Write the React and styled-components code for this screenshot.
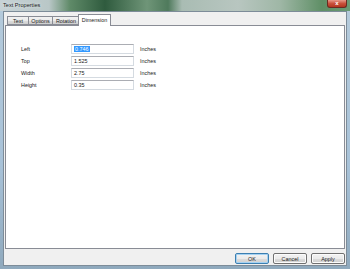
import React from 'react';
import styled, {createGlobalStyle} from 'styled-components';

const Global = createGlobalStyle`
  html, body {
    margin: 0;
    padding: 0;
    overflow: hidden;
    background: #9fb8c8;
  }
  body {
    font-family: "Liberation Sans", Arial, sans-serif;
  }
`;

const Window = styled.div`
  width: 350px;
  height: 269px;
  box-sizing: border-box;
  display: flex;
  flex-direction: column;
  padding: 0 3px 3px 3px;
  background: linear-gradient(90deg, #c7d2d6 0%, #b9c7c7 14%, #5f8a68 20%, #2f5b3e 30%, #6f9578 42%, #4f7a5c 48%, #a9bcb3 52%, #b8c6c0 68%, #9fb7a6 80%, #5f8f66 92%, #6a9a74 100%);
  position: relative;
`;

const Frame = styled.div`
  position: absolute;
  left: 0;
  right: 0;
  top: 11px;
  bottom: 0;
  background: linear-gradient(180deg, #b4cadb 0%, #a8c2d8 60%, #8fa9bd 100%);
  z-index: 0;
`;

const TitleBar = styled.div`
  height: 11px;
  display: flex;
  justify-content: space-between;
  align-items: flex-start;
  position: relative;
  z-index: 1;
`;

const Title = styled.div`
  font-size: 5.6px;
  color: #1a1a1a;
  line-height: 11px;
  padding-left: 0;
  text-shadow: 0 0 3px rgba(255, 255, 255, 0.9);
`;

const CloseBtn = styled.div`
  width: 20px;
  height: 8px;
  background: linear-gradient(180deg, #e89a8a 0%, #c9503b 50%, #b3361f 100%);
  border: 1px solid #6b2a22;
  border-top: none;
  border-radius: 0 0 3px 3px;
  color: #fff;
  font-size: 6px;
  font-weight: bold;
  line-height: 7px;
  text-align: center;
  box-sizing: border-box;
`;

const Client = styled.div`
  flex: 1;
  display: flex;
  flex-direction: column;
  background: #f0f0f0;
  border: 1px solid #7d8c99;
  padding-top: 2px;
  position: relative;
  z-index: 1;
`;

const Tabs = styled.div`
  height: 11px;
  display: flex;
  align-items: flex-end;
  padding-left: 3px;
  position: relative;
  z-index: 2;
`;

const Tab = styled.div`
  box-sizing: border-box;
  width: ${p => p.w}px;
  height: ${p => (p.active ? 12 : 9)}px;
  margin: ${p => (p.active ? '0 -1px -1px -1px' : '0 -1px 0 0')};
  border: 1px solid #898c95;
  border-bottom: ${p => (p.active ? 'none' : '1px solid #898c95')};
  background: ${p => (p.active ? '#ffffff' : 'linear-gradient(180deg, #f2f2f2 0%, #ebebeb 50%, #dddddd 51%, #cfcfcf 100%)')};
  font-size: 5.4px;
  color: #1a1a1a;
  display: flex;
  align-items: center;
  justify-content: center;
  padding-bottom: ${p => (p.active ? 2 : 0)}px;
  position: relative;
  z-index: ${p => (p.active ? 2 : 1)};
`;

const Panel = styled.div`
  flex: 1;
  margin: 0 1px 0 1px;
  background: #ffffff;
  border: 1px solid #898c95;
  padding: 18px 0 0 15px;
`;

const Form = styled.div`
  display: grid;
  grid-template-columns: 50px 63px auto;
  grid-auto-rows: 10px;
  row-gap: 2px;
  align-items: center;
`;

const Label = styled.div`
  font-size: 5.4px;
  color: #1a1a1a;
`;

const Field = styled.div`
  box-sizing: border-box;
  height: 10px;
  border: 1px solid #d5dbe1;
  border-top-color: #abadb3;
  background: #fff;
  font-size: 5.4px;
  color: #1a1a1a;
  line-height: 8px;
  padding-left: 2px;
`;

const Selected = styled.span`
  background: #3399ff;
  color: #fff;
  padding: 0 1px;
`;

const Unit = styled.div`
  font-size: 5.4px;
  color: #1a1a1a;
  padding-left: 6px;
`;

const Footer = styled.div`
  height: 16px;
  display: flex;
  justify-content: flex-end;
  align-items: flex-start;
  gap: 4px;
  padding: 4px 1px 0 0;
  box-sizing: border-box;
`;

const Button = styled.div`
  box-sizing: border-box;
  width: 34px;
  height: 11px;
  border: 1px solid ${p => (p.primary ? '#3c7fb1' : '#707070')};
  border-radius: 2px;
  background: linear-gradient(180deg, #f2f2f2 0%, #ebebeb 50%, #dddddd 51%, #cfcfcf 100%);
  box-shadow: ${p => (p.primary ? 'inset 0 0 0 1px #a6d2f2' : 'inset 0 0 0 1px #fbfbfb')};
  font-size: 5.4px;
  color: #1a1a1a;
  display: flex;
  align-items: center;
  justify-content: center;
`;

const tabs = [
  {name: 'Text', w: 22},
  {name: 'Options', w: 25},
  {name: 'Rotation', w: 28},
  {name: 'Dimension', w: 33, active: true},
];

const rows = [
  {label: 'Left', value: '0.746', selected: true},
  {label: 'Top', value: '1.525'},
  {label: 'Width', value: '2.75'},
  {label: 'Height', value: '0.35'},
];

export default function App() {
  return (
    <Window>
      <Global/>
      <Frame/>
      <TitleBar>
        <Title>Text Properties</Title>
        <CloseBtn>x</CloseBtn>
      </TitleBar>
      <Client>
        <Tabs>
          {tabs.map(t => (
            <Tab key={t.name} w={t.w} active={t.active}>{t.name}</Tab>
          ))}
        </Tabs>
        <Panel>
          <Form>
            {rows.map(r => (
              <React.Fragment key={r.label}>
                <Label>{r.label}</Label>
                <Field>{r.selected ? <Selected>{r.value}</Selected> : r.value}</Field>
                <Unit>Inches</Unit>
              </React.Fragment>
            ))}
          </Form>
        </Panel>
        <Footer>
          <Button primary>OK</Button>
          <Button>Cancel</Button>
          <Button>Apply</Button>
        </Footer>
      </Client>
    </Window>
  );
}
